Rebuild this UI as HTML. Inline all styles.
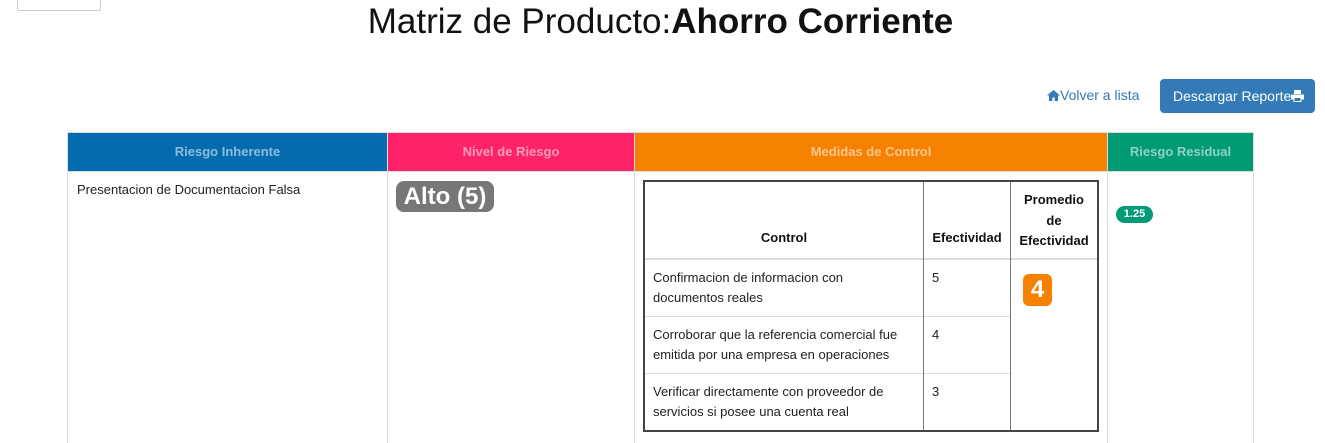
<!DOCTYPE html>
<html style="width:1325px;height:443px;overflow:hidden"><head><style>
body{margin:0;width:1325px;height:443px;overflow:hidden;background:#fff;font-family:"Liberation Sans",sans-serif;color:#111;position:relative}
div{box-sizing:border-box}
.a{position:absolute}
.h{position:absolute;top:133px;height:38px;font-size:13px;font-weight:bold;text-align:center;line-height:38px;color:rgba(255,255,255,.55)}
.v{position:absolute;background:#ddd;width:1px}
.t{font-size:13px;line-height:20px;color:#222}
</style></head><body>
<div class="a" style="left:17px;top:-5px;width:84px;height:16px;border:1px solid #ccc;border-radius:2px"></div>
<div class="a" style="left:0;width:1325px;top:0;text-align:center;font-size:35px;line-height:44px;padding-right:4px">Matriz de Producto:<b>Ahorro Corriente</b></div>
<div class="a" style="left:1047px;top:87px;font-size:14px;color:#337ab7;white-space:nowrap"><svg width="13" height="11" viewBox="0 0 13 11" style="vertical-align:-1px"><path d="M6.5 0L0 5.5h2V11h3.3V7.5h2.4V11H11V5.5h2z" fill="#337ab7"/></svg>Volver a lista</div>
<div class="a" style="left:1160px;top:79px;width:155px;height:34px;background:#337ab7;border-radius:4px;color:#fff;font-size:14px;line-height:34px;padding-left:13px;white-space:nowrap">Descargar Reporte<svg width="13" height="12" viewBox="0 0 13 12" style="vertical-align:-1px"><path d="M3 0h7v4H3zM0 4.5h13v5h-2.5V12h-8V9.5H0zM3.5 8h6v3h-6z" fill="#fff" fill-rule="evenodd"/></svg></div>
<div class="a" style="left:67px;top:132px;width:1187px;height:330px;border:1px solid #ddd"></div>
<div class="h" style="left:68px;width:319px;background:#036bae">Riesgo Inherente</div>
<div class="h" style="left:388px;width:246px;background:#fe2268">Nivel de Riesgo</div>
<div class="h" style="left:635px;width:472px;background:#f68000">Medidas de Control</div>
<div class="h" style="left:1108px;width:145px;background:#009a75">Riesgo Residual</div>
<div class="a" style="left:68px;top:171px;width:1185px;height:1px;background:#ddd"></div>
<div class="v" style="left:387px;top:133px;height:310px"></div>
<div class="v" style="left:634px;top:133px;height:310px"></div>
<div class="v" style="left:1107px;top:133px;height:310px"></div>
<div class="a t" style="left:77px;top:180px">Presentacion de Documentacion Falsa</div>
<div class="a" style="left:396px;top:181px;width:98px;height:31px;background:#777;border-radius:8px;color:#fff;font-weight:bold;font-size:24px;line-height:31px;text-align:center">Alto (5)</div>
<div class="a" style="left:1116px;top:206px;width:37px;height:17px;background:#009a75;border-radius:9px;color:#fff;font-weight:bold;font-size:11px;line-height:17px;text-align:center">1.25</div>
<div class="a" style="left:643px;top:180px;width:456px;height:252px;border:2px solid #444"></div>
<div class="a" style="left:645px;top:258px;width:452px;height:2px;background:#ddd"></div>
<div class="a" style="left:645px;top:316px;width:365px;height:1px;background:#ddd"></div>
<div class="a" style="left:645px;top:373px;width:365px;height:1px;background:#ddd"></div>
<div class="a" style="left:923px;top:182px;width:1px;height:248px;background:#777"></div>
<div class="a" style="left:1010px;top:182px;width:1px;height:248px;background:#777"></div>
<div class="a" style="left:645px;top:230px;width:278px;text-align:center;font-size:13px;font-weight:bold">Control</div>
<div class="a" style="left:924px;top:230px;width:86px;text-align:center;font-size:13px;font-weight:bold">Efectividad</div>
<div class="a" style="left:1011px;top:190px;width:86px;text-align:center;font-size:13px;font-weight:bold;line-height:20.5px">Promedio<br>de<br>Efectividad</div>
<div class="a t" style="left:653px;top:268px">Confirmacion de informacion con<br>documentos reales</div>
<div class="a t" style="left:653px;top:325px">Corroborar que la referencia comercial fue<br>emitida por una empresa en operaciones</div>
<div class="a t" style="left:653px;top:382px">Verificar directamente con proveedor de<br>servicios si posee una cuenta real</div>
<div class="a t" style="left:932px;top:268px">5</div>
<div class="a t" style="left:932px;top:325px">4</div>
<div class="a t" style="left:932px;top:382px">3</div>
<div class="a" style="left:1023px;top:274px;width:29px;height:32px;background:#f68000;border-radius:6px;color:#fff;font-weight:bold;font-size:24px;line-height:32px;text-align:center">4</div>
</body></html>
